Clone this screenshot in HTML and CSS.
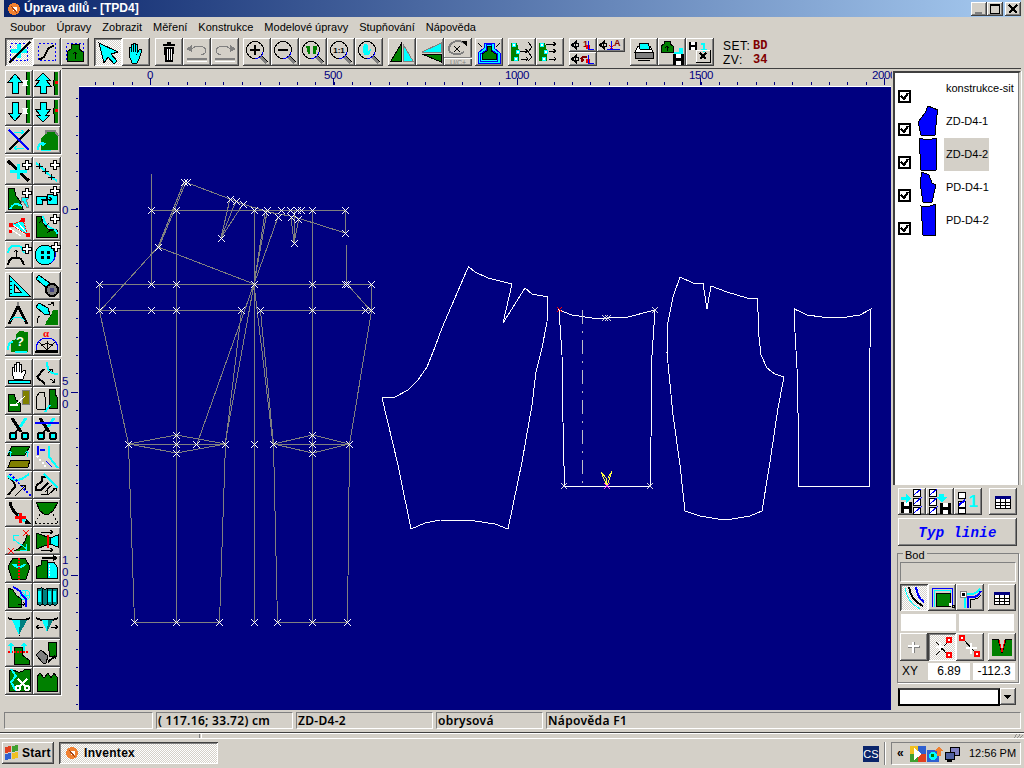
FILE: index.html
```html
<!DOCTYPE html>
<html lang="cs">
<head>
<meta charset="utf-8">
<title>Úprava dílů - [TPD4]</title>
<link rel="stylesheet" href="styles.css">
</head>
<body>
<svg class="defs" width="0" height="0">
  <symbol id="plus" viewBox="0 0 9 9" width="9" height="9" overflow="visible"><path class="w K" d="M3 0h3v3h3v3H6v3H3V6H0V3h3z"/></symbol>
  <symbol id="mag" viewBox="0 0 28 28" width="28" height="28"><circle class="K" cx="12" cy="12" r="8.5"/><path class="B" d="M12 20.500c5 0 8-3 8-7"/><path class="A t3" d="M18 19l6 6"/><path class="K" d="M19 18l6 6"/></symbol>
  <symbol id="sci" viewBox="0 0 28 28" width="28" height="28"><path class="K t3" d="M7 3l9 14"/><path class="C t3" d="M21 3l-6 9"/><path class="K t2" d="M14 13l-4 5"/><circle class="c K t2" cx="8" cy="21" r="3.5"/><circle class="c K t2" cx="20" cy="21" r="3.5"/></symbol>
  <symbol id="cal" viewBox="0 0 28 28" width="28" height="28"><path class="w K" d="M6.500 8.500h15v12h-15z"/><path class="n" d="M6 8h16v3H6z"/><path class="K" d="M6 14.500h16M6 17.500h16M11 11v10M16 11v10"/></symbol>
  <symbol id="up" viewBox="0 0 28 28" width="28" height="28"><path class="c K" d="M10 4l7 8h-4v11H7V12H3z"/></symbol>
  <symbol id="up2" viewBox="0 0 28 28" width="28" height="28"><path class="c K" d="M10 3l7 7h-4l5 6h-5v7H7v-7H2l5-6H3z"/></symbol>
  <symbol id="fl" viewBox="0 0 12 12" width="12" height="12"><path class="k" d="M0 1h11v11H0z"/><path class="w" d="M3 1h5v4H3zM3 8h5v4H3z"/></symbol>
  <symbol id="chk" viewBox="0 0 10 26" width="10" height="26"><path class="K w" d="M.5 .5h7v7h-7zM.5 9.500h7v7h-7zM.5 18.500h7v7h-7z"/><path class="B" d="M1 6l8-7M1 15l8-7M1 24l8-7"/></symbol>
</svg>

<div class="window">
  <header class="titlebar">
    <svg class="appicon" viewBox="0 0 12 12"><circle class="o2" cx="6" cy="6" r="6"/><circle class="w" cx="7" cy="6" r="2.500"/><path class="Br" d="M3 3l6 7"/></svg>
    <span>Úprava dílů - [TPD4]</span>
    <div class="winbtns">
      <span class="wb"><svg viewBox="0 0 16 14" class="wi"><path class="A t2" d="M4 11h7"/></svg></span>
      <span class="wb"><svg viewBox="0 0 16 14" class="wi"><path class="K" d="M3.500 2.500h9v9h-9z"/><path class="K t2" d="M3 3h10"/></svg></span>
      <span class="wb close"><svg viewBox="0 0 16 14" class="wi"><path class="K t2" d="M4 3l8 8M12 3l-8 8"/></svg></span>
    </div>
  </header>

  <nav class="menu">
    <span>Soubor</span><span>Úpravy</span><span>Zobrazit</span><span>Měření</span><span>Konstrukce</span><span>Modelové úpravy</span><span>Stupňování</span><span>Nápověda</span>
  </nav>

  <div class="toolbar">
    <div class="grp">
      <div class="b on"><svg class="i"><rect class="B dash" x="5.500" y="5.500" width="17" height="17"/><path class="c" d="M6 11h6V6h4v5h6v4h-6v5h-4v-5H6z"/><path class="K t2" d="M4 25L25 4"/></svg></div>
      <div class="b"><svg class="i"><rect class="B dash" x="5.500" y="5.500" width="17" height="17"/><path class="K t2" d="M6 21c9 0 5-12 15-13"/></svg></div>
      <div class="b"><svg class="i"><rect class="B dash" x="5.500" y="5.500" width="17" height="17"/><path class="g K" d="M6 23V14l4-3V6h8v5l4 3v9z"/><path class="K" d="M14 21v-7M12 16l2-2 2 2"/></svg></div>
    </div>
    <div class="grp">
      <div class="b on"><svg class="i"><path class="c K" d="M5 5l19 9-7 2 6 7-3 3-6-7-4 6z"/></svg></div>
      <div class="b"><svg class="i"><path class="c K" d="M7 14V9h2v5V6h2v8V5h2v9V6h2v9l3-4 2 1-3 9-2 4H10l-3-8z"/></svg></div>
    </div>
    <div class="grp">
      <div class="b"><svg class="i"><path class="K t2" d="M8 7h12M12 5h4"/><path class="k" d="M9 9h10l-1 15h-8z"/><path class="W" d="M12 11v11M14 11v11M16 11v11"/></svg></div>
      <div class="b"><svg class="i"><path class="A" d="M8 11c5-4 14-4 15 2 0 2-2 3-5 4"/><path class="a" d="M3 11l6-4v7z"/><path class="A t2" d="M4 21h20"/><path class="W" d="M4 23h20"/></svg></div>
      <div class="b"><svg class="i"><path class="A" d="M20 11c-5-4-14-4-15 2 0 2 2 3 5 4"/><path class="a" d="M25 11l-6-4v7z"/><path class="A t2" d="M4 21h20"/><path class="W" d="M4 23h20"/></svg></div>
    </div>
    <div class="grp g4">
      <div class="b"><svg class="i"><use href="#mag"/><path class="K t2" d="M7 12h10M12 7v10"/></svg></div>
      <div class="b"><svg class="i"><use href="#mag"/><path class="K t2" d="M7 12h10"/></svg></div>
      <div class="b"><svg class="i"><use href="#mag"/><path class="g" d="M7 8h4v8H9zM14 8h4l-1 8h-3z"/></svg></div>
      <div class="b"><svg class="i"><use href="#mag"/><text class="st" x="12" y="15" text-anchor="middle">1:1</text></svg></div>
      <div class="b"><svg class="i"><use href="#mag"/><path class="c" d="M8 12V8h1v3V6h1v5V6h2v5V7h1v6l2-2 1 1-2 5H9z"/></svg></div>
    </div>
    <div class="grp g3">
      <div class="b"><svg class="i"><path class="g K" d="M13 6v17H3z"/><path class="c A" d="M15 6l10 17H15z"/></svg></div>
      <div class="b"><svg class="i"><path class="c A" d="M25 5v9H6z"/><path class="g K" d="M6 16h19v8z"/></svg></div>
      <div class="b"><svg class="i"><path class="A t2" d="M20 5c-7-5-15 0-15 6 0 4 8 8 15 3"/><path class="k" d="M17 3h6v6z"/><path class="K" d="M10 8l6 6M16 8l-6 6"/><path class="A" d="M0 19.500h28"/><path class="W" d="M0 20.500h28"/><text class="dt" x="14" y="27" text-anchor="middle">U/C+</text></svg></div>
    </div>
    <div class="grp g3">
      <div class="b"><svg class="i"><path class="c B" d="M3 25V15l6-5V5h10v5l6 5v10z"/><path class="c B" d="M5.500 23V16l6-4V6h5v6l6 4v7z"/><path class="g K" d="M7 21v-5l5-3V8h4v5l5 3v5z"/><path class="K" d="M7 9L3 5M21 9l4-4"/></svg></div>
    </div>
    <div class="grp">
      <div class="b"><svg class="i"><path class="g" d="M3 5h6l2 8v10H3z"/><path class="K" d="M12 13h7M17 11l3 2-3 2M13 21h6M18 19l2 2-2 2M20 4l4 5-4 5 4 5-4 4"/><path class="w C" d="M4.500 5.500h3v3h-3zM8.500 12.500h3v3h-3zM6.500 19.500h3v3h-3z"/></svg></div>
      <div class="b"><svg class="i"><path class="g" d="M3 5h6l2 8v10H3z"/><path class="K" d="M10 6h9M17 4l3 2-3 2M13 13h6M17 11l3 2-3 2M13 21h7M18 19l2 2-2 2"/><path class="w C" d="M4.500 5.500h3v3h-3zM8.500 12.500h3v3h-3zM6.500 19.500h3v3h-3z"/></svg></div>
    </div>
    <div class="grp smalls">
      <div class="b s"><svg class="i"><path class="K t2" d="M8 3L3 7l5 4"/><circle class="K" cx="8" cy="7" r="2"/><text class="rt" x="14" y="9">1</text><path class="r" d="M17 7h4v4h-4z"/><path class="B" d="M19 11h6M19 3v9"/></svg></div>
      <div class="b s"><svg class="i"><path class="K t2" d="M8 3L3 7l5 4"/><circle class="K" cx="8" cy="7" r="2"/><text class="rt" x="17" y="8">A</text><path class="R" d="M12 7l5 5M17 7l-5 5"/><path class="B" d="M10 11h13M14 3v9"/></svg></div>
      <div class="b s"><svg class="i"><path class="K t2" d="M8 3L3 7l5 4"/><circle class="K" cx="8" cy="7" r="2"/><path class="M t2" d="M13 5v5M13 5h5M12 6l3 3"/><path class="r" d="M17 7h4v4h-4z"/><path class="B" d="M19 11h6M19 3v9"/></svg></div>
    </div>
    <div class="grp">
      <div class="b"><svg class="i"><path class="w K" d="M8 8h12l3 6H5z"/><path class="c K" d="M9 5h9l2 6H10z"/><path class="a K" d="M5 14h18v6H5z"/><path class="K" d="M8 22h12"/></svg></div>
      <div class="b"><svg class="i"><path class="g K" d="M3 14V8l3-2V3h6v3l3 2v6z"/><path class="K" d="M9 13V8M7.500 10L9 8l1.500 2"/><path class="c" d="M16 14h9v2h-9zM21 10h4v4h-4z"/><use href="#fl" x="15" y="15"/></svg></div>
      <div class="b"><svg class="i"><use href="#fl" transform="translate(3 3) scale(.75)"/><path class="C t2" d="M15 6h3v6"/><path class="c" d="M15 11h6l-3 4z"/><path class="K" d="M10.500 12.500h14v12h-14z"/><path class="W" d="M10 12h14M10 12v12"/><path class="K t2" d="M14 15l6 6M20 15l-6 6"/></svg></div>
    </div>
    <div class="setinfo">
      <div class="setrow"><span class="setl">SET:</span><b>BD</b></div>
      <div class="setrow"><span class="setl">ZV:</span><b>34</b></div>
    </div>
  </div>

  <div class="main">
    <aside class="tools">
      <div class="tg">
        <div class="b"><svg class="i"><use href="#up"/><path class="g" d="M21 2h4v23h-4z"/><path class="K" d="M21 2c1 6 1 6-1 11 2 5 2 5 1 12"/><path class="W t2" d="M18 10l4 6M22 10l-4 6"/></svg></div>
        <div class="b"><svg class="i"><use href="#up2"/><path class="g" d="M21 2h4v23h-4z"/><path class="K" d="M21 2c1 6 1 6-1 11 2 5 2 5 1 12"/><path class="r" d="M22 11h3v3h-3z"/></svg></div>
        <div class="b"><svg class="i"><use href="#up" transform="matrix(1 0 0 -1 0 27)"/><path class="g" d="M21 2h4v23h-4z"/><path class="K" d="M21 2c1 6 1 6-1 11 2 5 2 5 1 12"/><path class="W t2" d="M18 10l4 6M22 10l-4 6"/></svg></div>
        <div class="b"><svg class="i"><use href="#up2" transform="matrix(1 0 0 -1 0 27)"/><path class="g" d="M21 2h4v23h-4z"/><path class="K" d="M21 2c1 6 1 6-1 11 2 5 2 5 1 12"/><path class="r" d="M22 11h3v3h-3z"/></svg></div>
        <div class="b"><svg class="i"><path class="K t2" d="M4 24L24 4"/><path class="B t2" d="M4 4l20 20"/><path class="C" d="M9 6h10M16 4l3 2-3 2M9 22h10M12 20l-3 2 3 2"/></svg></div>
        <div class="b"><svg class="i"><path class="g" d="M8 24V12l5-4V5h9l3 5v14z"/><path class="A t2" d="M13 8V5h9l3 5"/><path class="C t2" d="M5 24c0-5 2-7 6-7"/><path class="c" d="M8 17h5l-3 4z"/><path class="C" d="M8 24h10"/></svg></div>
      </div>
      <div class="tg">
        <div class="b"><svg class="i"><path class="K t3" d="M3 4l21 20"/><path class="c" d="M5 13h17v3H5zM12 7h3v15h-3z"/><use href="#plus" x="17" y="3"/></svg></div>
        <div class="b"><svg class="i"><path class="C t2" d="M3 6c6 4 12 12 21 18"/><path class="K" d="M3 9h7M6 6v6M9 14h7M12 11v6M15 20h7M18 17v6"/><use href="#plus" x="17" y="3"/></svg></div>
        <div class="b"><svg class="i"><path class="g K" d="M3 3h6l2 8 4 5 3 8H3z"/><path class="c A" d="M16 12h7v2l-2 1 3 7-2 1-4-7-2 2z"/><path class="C t2" d="M5 24c4-6 6-6 12-3"/><use href="#plus" x="17" y="3"/></svg></div>
        <div class="b"><svg class="i"><path class="c K" d="M3 11h10v4H9v4H3zM14 9h10v10H14z"/><path class="K" d="M8 14h11M16 12l3 2-3 2"/><use href="#plus" x="17" y="1"/></svg></div>
        <div class="b"><svg class="i"><path class="c" d="M7 11l11-4 5 15z"/><path class="W" d="M9 12l10 9M13 10l8 9M4 15l12 8"/><path class="R dash2" d="M6 12l12-5 5 15L6 12"/><path class="r" d="M4 10h4v4H4zM16 5h4v4h-4zM21 20h4v4h-4zM4 17h3v3H4z"/></svg></div>
        <div class="b"><svg class="i"><path class="g K" d="M3 3h5l2 7 5 6 9 1v7H3z"/><path class="C t2" d="M10 3c1 7 3 10 8 12 3 1 6 3 6 6"/><path class="K" d="M6 10l3-3M16 10l-3 3M14 20l4-3M21 16l-3 2"/><use href="#plus" x="17" y="1"/></svg></div>
        <div class="b"><svg class="i"><path class="C t2" d="M3 12c1-6 3-7 6-7h4c3 0 4 2 6 7"/><path class="K t2" d="M3 24c1-6 3-7 6-7h4c3 0 4 2 6 7"/><path class="K" d="M11 18V9M9 11l2-2 2 2"/><use href="#plus" x="17" y="3"/></svg></div>
        <div class="b"><svg class="i"><circle class="c K" cx="12" cy="14" r="10"/><path class="B" d="M20 6c4 5 3 12-2 16"/><path class="k" d="M8 10h3v3H8zM14 10h3v3h-3zM8 15h3v3H8zM14 15h3v3h-3z"/><use href="#plus" x="18" y="1"/></svg></div>
      </div>
      <div class="tg">
        <div class="b"><svg class="i"><path class="c K" d="M4 3l21 21H4z"/><path class="d3 K" d="M9 12l7 8H9z"/><path class="K" d="M5 9h2M5 13h2M5 17h2M5 21h2"/></svg></div>
        <div class="b"><svg class="i"><path class="c K" d="M3 7l3-4 12 9-3 5z"/><circle class="a K t2" cx="19" cy="18" r="6"/><circle class="n2" cx="19" cy="18" r="2.500"/></svg></div>
        <div class="b"><svg class="i"><path class="A t2" d="M13 2v4"/><path class="K t3" d="M13 6L4 24M13 6l9 18"/><path class="C" d="M5 21c3-5 12-5 15 0"/></svg></div>
        <div class="b"><svg class="i"><path class="g" d="M12 25c1-5 6-8 8-15h5v15z"/><path class="c K" d="M3 7l3-4 9 5 2 7-6-1z"/><path class="K" d="M15 5l6-2M18 2l3 1-1 3M4 23c0-5 1-6 3-7"/></svg></div>
        <div class="b"><svg class="i"><path class="g" d="M6 24V13l5-2V6l4-3 8 1v20z"/><text class="qm" x="15" y="18" text-anchor="middle">?</text><path class="C t2" d="M3 22c0-5 1-8 5-8M10 24h12"/></svg></div>
        <div class="b"><svg class="i"><text class="alpha" x="13" y="9" text-anchor="middle">α</text><path class="B" d="M3 22c0-8 5-12 11-12s11 4 11 12"/><path class="K" d="M2.500 22.500h22M14 22l-8-8M14 22l8-8M14 22v-9M8 18c3-3 9-3 12 0"/><path class="K t2" d="M2 24h23"/></svg></div>
      </div>
      <div class="tg">
        <div class="b"><svg class="i"><path class="w K" d="M7 14V8h2v5V5h2v8V3h3v10V5h2v9l3-3 2 1-3 8H9z"/><path class="c K" d="M3 21h22v3H3z"/></svg></div>
        <div class="b"><svg class="i"><path class="C t2" d="M14 3c0 9 5 12 11 12"/><path class="K t2" d="M4 18l7-8M4 18l8 7"/><path class="K" d="M15 14l4-4M16 10h3v3M17 20l5 3M19 24l3-1-1-3"/></svg></div>
        <div class="b"><svg class="i"><path class="g K" d="M3 7h6l2 6 4 3v8H3z"/><path class="o A" d="M17 3h7v14h-7V9z"/><path class="w" d="M5 17h8v2H5z"/><path class="W" d="M10 18l10-9"/></svg></div>
        <div class="b"><svg class="i"><path class="K" d="M3 10l4-5h4l1 5v12H4z"/><path class="g K" d="M16 2h6v5l2 3v11h-8z"/><path class="k" d="M19 6v10"/><path class="C t2" d="M12 25l5-7"/></svg></div>
        <div class="b"><svg class="i"><use href="#sci"/></svg></div>
        <div class="b"><svg class="i"><use href="#sci"/><path class="B t2" d="M2 8h24"/></svg></div>
        <div class="b"><svg class="i"><path class="g K" d="M7 3h18l-5 9H3z"/><path class="o K" d="M6 17h19l-2 7H3z"/><path class="C" d="M5 14V8M3 10l2-2 2 2M22 14V8M20 10l2-2 2 2"/></svg></div>
        <div class="b"><svg class="i"><path class="B t2" d="M5 3v9M7 7h5"/><path class="W t2 dash3" d="M4 13l9 11"/><path class="B" d="M13 18l6 6"/><path class="C t2" d="M16 3v11l9 11"/></svg></div>
        <div class="b"><svg class="i"><path class="K t2" d="M3 6c5 3 7 7 7 10l-7 8"/><path class="C t2" d="M3 5c5 5 12 6 21-2"/><path class="B t2 dash4" d="M5 3l21 22"/><path class="K" d="M10 25l10-10M15 14h5v5"/></svg></div>
        <div class="b"><svg class="i"><path class="K t2" d="M3 15l6-5v-4h5M3 15v4h5l7-7"/><path class="K" d="M8 23h6v-5l5-4M12 21l5-5"/><path class="C t2" d="M11 3l14 14"/><path class="K" d="M15 24l8-7M20 17h3v3"/></svg></div>
        <div class="b"><svg class="i"><path class="K t3" d="M5 3c1 7 4 10 8 13"/><path class="C t3" d="M13 16l7 6"/><path class="r" d="M14 14h3v10h-3zM10 17h11v3H10z"/><path class="k" d="M21 20l5 5-6 0z"/></svg></div>
        <div class="b"><svg class="i"><path class="g K" d="M3 3h22l-5 9-4 3H11l-4-3z"/><path class="K dash4" d="M2 24l5-9M25 24l-5-9M2 24h24"/></svg></div>
        <div class="b"><svg class="i"><path class="g" d="M9 24c6-2 11-7 13-16h3v16z"/><path class="K" d="M9 24c6-2 11-7 13-16"/><path class="R" d="M18 3l6 6M24 3l-6 6M3 21l6 6M9 21l-6 6"/><path class="C" d="M8 12l14 10M8 8v6M8 8h6M21 17v6h-6"/></svg></div>
        <div class="b"><svg class="i"><path class="g K" d="M3 6l14 5v6L3 22z"/><path class="c K" d="M17 11l8-3v12l-8-3z"/><path class="r" d="M14 8h2v13h-2z"/><path class="K" d="M8 5h12M17 3l3 2-3 2M8 23h12M17 21l3 2-3 2"/></svg></div>
        <div class="b"><svg class="i"><path class="g K" d="M8 3h12l5 9-4 12H7L3 12z"/><path class="C t2" d="M8 9c3 4 9 4 12 0"/><path class="C" d="M12 9l-3 1 2 2"/><path class="R dash2 t2" d="M14 3v22"/></svg></div>
        <div class="b"><svg class="i"><path class="g K" d="M3 23V12l5-2V5h6v18z"/><path class="c" d="M15 7h6l3 5v11h-9z"/><path class="K" d="M15 7h6l3 5v11H3"/><path class="K t2" d="M9 3h13M20 1l3 2-3 2"/><path class="W dash2" d="M16 10v12"/></svg></div>
        <div class="b"><svg class="i"><path class="g K" d="M3 5l5 2 3 5 5 4v8H3z"/><circle class="C" cx="20" cy="12" r="5"/><path class="C" d="M15 12h10M20 7v10M16 8l8 8"/><path class="B t2" d="M8 4c4 2 8 3 9 8l4 4v8"/><path class="K" d="M13 21h7M18 19l2 2-2 2"/></svg></div>
        <div class="b"><svg class="i"><path class="d4 K" d="M4 5c2 2 5-1 5 0v16c0 1-3 2-5 0zM9 5c2 2 5 1 5 0v16c0 1-3 2-5 0zM14 5c2 1 5 1 5 0v16c0 1-3 2-5 0zM19 5c2 1 5 1 5 0v16c0 1-3 2-5 0z"/><path class="c" d="M5 8h3v11H5zM15 8h3v11h-3zM20 8h3v11h-3z"/></svg></div>
        <div class="b"><svg class="i"><path class="K t2" d="M3 7l5 2h12l5-2"/><path class="c" d="M7 9h8l-1 15z"/><path class="d4" d="M15 9h7l-8 15z"/><path class="K" d="M14 24v1"/></svg></div>
        <div class="b"><svg class="i"><path class="K t2" d="M3 7l5 2h12l5-2"/><path class="c" d="M9 9h6l-1 12z"/><path class="d4" d="M15 9h5l-6 12z"/><path class="K" d="M3 16h7M3 16l3-2M3 16l3 2M25 16h-7M25 16l-3-2M25 16l-3 2"/></svg></div>
        <div class="b"><svg class="i"><path class="g K" d="M9 8h8v8l7 5v4H9z"/><path class="R dash2 t2" d="M3 13h20"/><path class="C t2" d="M6 14V4M19 12V4"/><path class="c" d="M3 7l3-4 3 4zM16 7l3-4 3 4z"/></svg></div>
        <div class="b"><svg class="i"><path class="g K" d="M16 3h7v14h-7v-5l-1-4z"/><path class="a K" d="M3 16l5-5 7 6-2 7h-3z"/><path class="K t2" d="M15 23l7-6"/><path class="K" d="M19 17h3v3"/></svg></div>
        <div class="b"><svg class="i"><path class="g K" d="M4 3h5c3 3 8 3 11-1h5v22H4z"/><path class="C t2" d="M6 2l5 7-5 6 5 9"/><path class="W t2" d="M13 12l8 8M22 12l-8 8"/><circle class="W t2" cx="13" cy="21" r="2"/><circle class="W t2" cx="22" cy="21" r="2"/></svg></div>
        <div class="b"><svg class="i"><path class="g K" d="M4 24V10l3-4 4 5 4-5 3 5 3-5 3 4v14z"/></svg></div>
      </div>
    </aside>

    <svg class="stage" viewBox="62 66 830 645">
      <path class="w" d="M79 86h812v1H79z"/>
      <path class="nv" d="M79 87h812v623H79z"/>
      <path class="N tick3" d="M95 83.500h795"/>
      <path class="N tick2" d="M77 98v612"/>
      <path class="N" d="M150.500 78v7M333.500 78v7M517.500 78v7M700.500 78v7M884.500 78v7M71 209.500h7M71 392.500h7M71 575.500h7"/>
      <g class="rul">
        <text x="150" y="79" text-anchor="middle">0</text>
        <text x="333" y="79" text-anchor="middle">500</text>
        <text x="517" y="79" text-anchor="middle">1000</text>
        <text x="701" y="79" text-anchor="middle">1500</text>
        <text x="884" y="79" text-anchor="middle">2000</text>
        <text x="65" y="214" text-anchor="middle">0</text>
        <text x="65" y="385" text-anchor="middle">5</text>
        <text x="65" y="397" text-anchor="middle">0</text>
        <text x="65" y="408" text-anchor="middle">0</text>
        <text x="65" y="564" text-anchor="middle">1</text>
        <text x="65" y="576" text-anchor="middle">0</text>
        <text x="65" y="587" text-anchor="middle">0</text>
        <text x="65" y="597" text-anchor="middle">0</text>
      </g>
      <path class="con" d="M151.500 210.500H345.500M151.500 174V284M176.500 210V622M254.500 210V622M312.500 210V622M345.500 210V233M346.500 245V284M99.500 284.500H371.500M99.500 310.500H241.500M260.500 310.500H371.500M99.500 284V311M371.500 284V311M185 182L230 199L243 204L268 212L290 216L298 218L345 233M184 182L158 247L254 284M186 182L159 247M158 247L99 312M221 238L230 199M221 238L236 201M221 238L243 204M294 243L291 217M294 243L294 211M294 243L299 218M254 284L267 212M254 284L265 213M254 284L278 217M254 284L197 444M254 284L225 444M254 284L273 444M99.500 311L128.500 444M241.500 311L225.500 444M260.500 311L273.500 444M371.500 311L349.500 444M128.500 444L134.500 622M225.500 444L219.500 622M273.500 444L277.500 622M349.500 444L347.500 622M134.500 622.500H219.500M277.500 622.500H347.500M128.500 444.500H225.500M273.500 444.500H349.500M128.500 444L176.500 435L225.500 444L176.500 453ZM273.500 444L312.500 435L349.500 444L312.500 453ZM347 284L371 311"/>
      <path class="mk" d="M148 207l7 7m0-7l-7 7M173 207l7 7m0-7l-7 7M251 207l7 7m0-7l-7 7M264 207l7 7m0-7l-7 7M278 207l7 7m0-7l-7 7M287 207l7 7m0-7l-7 7M294 207l7 7m0-7l-7 7M298 207l7 7m0-7l-7 7M309 207l7 7m0-7l-7 7M342 207l7 7m0-7l-7 7M181 179l7 7m0-7l-7 7M184 179l7 7m0-7l-7 7M227 196l7 7m0-7l-7 7M233 198l7 7m0-7l-7 7M240 201l7 7m0-7l-7 7M218 235l7 7m0-7l-7 7M155 244l7 7m0-7l-7 7M342 230l7 7m0-7l-7 7M275 214l7 7m0-7l-7 7M288 214l7 7m0-7l-7 7M295 216l7 7m0-7l-7 7M291 240l7 7m0-7l-7 7M262 209l7 7m0-7l-7 7M96 281l7 7m0-7l-7 7M148 281l7 7m0-7l-7 7M173 281l7 7m0-7l-7 7M251 281l7 7m0-7l-7 7M309 281l7 7m0-7l-7 7M342 281l7 7m0-7l-7 7M344 281l7 7m0-7l-7 7M368 281l7 7m0-7l-7 7M96 307l7 7m0-7l-7 7M109 307l7 7m0-7l-7 7M148 307l7 7m0-7l-7 7M173 307l7 7m0-7l-7 7M238 307l7 7m0-7l-7 7M257 307l7 7m0-7l-7 7M309 307l7 7m0-7l-7 7M362 307l7 7m0-7l-7 7M368 307l7 7m0-7l-7 7M125 441l7 7m0-7l-7 7M173 441l7 7m0-7l-7 7M193 441l7 7m0-7l-7 7M222 441l7 7m0-7l-7 7M251 441l7 7m0-7l-7 7M270 441l7 7m0-7l-7 7M309 441l7 7m0-7l-7 7M346 441l7 7m0-7l-7 7M173 432l7 7m0-7l-7 7M309 432l7 7m0-7l-7 7M173 450l7 7m0-7l-7 7M309 450l7 7m0-7l-7 7M131 619l7 7m0-7l-7 7M173 619l7 7m0-7l-7 7M216 619l7 7m0-7l-7 7M251 619l7 7m0-7l-7 7M274 619l7 7m0-7l-7 7M309 619l7 7m0-7l-7 7M344 619l7 7m0-7l-7 7"/>
      <path class="pc" d="M468.500 266.500L475 272L488 278L500 281L512 284L503 323L525 288L532 294L548 297L547 322L542 348L536 372L532 405L522 462L508 529L495 524L475 521L440 520L425 523L411 529L398 465L382 398L395 397L408 390L418 380L427 367L435 347L442 328Z"/>
      <path class="pc" d="M559 310L572 315L592 318L608 318L628 317L655 310L652 355L651 438L650.500 486.500H564.500L563 422L562 355Z"/>
      <path class="dd" d="M582.500 310V486"/>
      <path class="mk2" d="M605 315l6 6m0-6l-6 6M602 315l6 6m0-6l-6 6M652 307l6 6m0-6l-6 6M561 483l6 6m0-6l-6 6M647 483l6 6m0-6l-6 6"/>
      <path class="R" d="M557 307l5 5m0-5l-5 5"/>
      <path class="Y" d="M601 472L607 486L612 471M601 472L606 478L607 484M612 471L608 478"/>
      <path class="M2" d="M604 483l6 6m0-6l-6 6"/>
      <path class="pc" d="M680 277L693 283L703 283L707 309L711 286L727 292L747 298L757.500 299L759 337L761 355L767 368L775 374L784 377L778 408L770 462L762 511L750 516L732 519L718 519L700 516L685 511L680 465L673 415L667 353L668 322L673 297Z"/>
      <path class="pc" d="M794.500 309L807 315L822 317L847 317L860 315L871 309L870 348L869 380L869 486.500H798L798 413L797 368L794.500 323Z"/>
    </svg>

    <aside class="side">
      <div class="list">
        <div class="row r0"><span class="cb"><svg viewBox="0 0 9 9"><path class="K t2" d="M1 4l3 3 4-6"/></svg></span><span class="thumb"></span><span class="lab">konstrukce-sit</span></div>
        <div class="row"><span class="cb"><svg viewBox="0 0 9 9"><path class="K t2" d="M1 4l3 3 4-6"/></svg></span><svg class="thumb" viewBox="0 0 22 33"><path class="bl K" d="M10 1L20 5L19 10L17 30H3L0 17L7 8Z"/></svg><span class="lab">ZD-D4-1</span></div>
        <div class="row"><span class="cb"><svg viewBox="0 0 9 9"><path class="K t2" d="M1 4l3 3 4-6"/></svg></span><svg class="thumb" viewBox="0 0 22 33"><path class="bl K" d="M1 0L9 2L19 0L18 32H3Z"/></svg><span class="lab sel">ZD-D4-2</span></div>
        <div class="row"><span class="cb"><svg viewBox="0 0 9 9"><path class="K t2" d="M1 4l3 3 4-6"/></svg></span><svg class="thumb" viewBox="0 0 22 33"><path class="bl K" d="M4 1L11 4L14 12L18 14L14 31H5L2 12Z"/></svg><span class="lab">PD-D4-1</span></div>
        <div class="row"><span class="cb"><svg viewBox="0 0 9 9"><path class="K t2" d="M1 4l3 3 4-6"/></svg></span><svg class="thumb" viewBox="0 0 22 33"><path class="bl K" d="M3 2L10 3L17 0L17 31H5Z"/></svg><span class="lab">PD-D4-2</span></div>
      </div>
      <div class="prow p1">
        <div class="b"><svg class="i"><use href="#fl" x="3" y="13"/><path class="c" d="M3 9h5V6l5 5-5 4v-3H3z"/><use href="#chk" x="15" y="1"/></svg></div>
        <div class="b"><svg class="i"><use href="#chk" x="3" y="1"/><path class="c" d="M13 6h5v3h3l-5 6-5-6h2z"/><use href="#fl" x="14" y="14"/></svg></div>
        <div class="b"><svg class="i"><path class="K w" d="M4.500 4.500h7v6h-7zM4.500 13.500h7v6h-7zM4.500 20.500h7v5h-7z"/><path class="B t2" d="M5 17l6-5"/><text class="one" x="19" y="19" text-anchor="middle">1</text></svg></div>
        <div class="b pgap"><svg class="i"><use href="#cal"/></svg></div>
      </div>
      <div class="b typ">Typ linie</div>
      <fieldset class="bod">
        <legend>Bod</legend>
        <div class="sunk"></div>
        <div class="prow r27">
          <div class="b on"><svg class="i"><path class="C" d="M5 4c1 9 6 16 15 21"/><path class="K t2" d="M9 3c1 9 6 15 14 19"/><path class="B t2" d="M16 3c1 7 3 12 8 15"/></svg></div>
          <div class="b"><svg class="i"><path class="B" d="M4 23V4h20v17"/><path class="C" d="M6 23V6h16v15"/><path class="g K" d="M8 9h14v13H8z"/><path class="w" d="M21 19h3v3h-3z"/><path class="K" d="M24 21h2v2h-2z"/></svg></div>
          <div class="b"><svg class="i"><path class="B t2" d="M12 24V13h6c3 0 4-2 7-6"/><path class="C t2" d="M9 24V10h7c3 0 5-2 8-5"/><path class="K" d="M14 24V15h5c3 0 4-2 6-4"/><path class="w A" d="M4.500 7.500h6v6h-6z"/><path class="k" d="M6 9h3v3H6z"/></svg></div>
          <div class="b pgap2"><svg class="i"><use href="#cal"/></svg></div>
        </div>
        <div class="whites"><span></span><span></span></div>
        <div class="prow">
          <div class="b"><svg class="i"><path class="A t2" d="M14 9v11M8 14h12"/><path class="W t2" d="M13 9v11M8 13h11"/></svg></div>
          <div class="b on"><svg class="i"><path class="K" d="M8 9l12 13M20 9L8 22"/><path class="W t2" d="M8 14h8M12 9v9"/><path class="w R t2" d="M19 5h4v4h-4zM19 20h4v4h-4z"/></svg></div>
          <div class="b"><svg class="i"><path class="K" d="M6 5l15 16"/><path class="W t2" d="M10 15h11M15 10v11"/><path class="w R t2" d="M4 3h4v4H4zM19 19h4v4h-4z"/></svg></div>
          <div class="b pgap2"><svg class="i"><path class="g" d="M4 6h6l4 14 4-14h6v17H4z"/><path class="K" d="M4 6h6l4 14 4-14h6"/><path class="R" d="M11 7l3 12 3-12"/></svg></div>
        </div>
        <div class="xy"><span class="xyl">XY</span><span class="val v1">6.89</span><span class="val">-112.3</span></div>
      </fieldset>
      <div class="combo"><span class="cfield"></span><span class="cbtn"><svg viewBox="0 0 8 4" class="carr"><path class="k" d="M0 0h7L3.500 4z"/></svg></span></div>
    </aside>
  </div>

  <footer class="status">
    <span class="sp s1"></span><span class="sp s2">( 117.16; 33.72) cm</span><span class="sp s3">ZD-D4-2</span><span class="sp s4">obrysová</span><span class="sp s5">Nápověda F1</span>
  </footer>
</div>

<div class="strip"><span class="split"></span><svg class="grip" viewBox="0 0 12 5"><path class="A" d="M1 5l4-5M5 5l4-5M9 5l3-4"/></svg></div>

<div class="taskbar">
  <div class="start">
    <svg class="flag" viewBox="0 0 16 16"><path class="fr1" d="M1 2l6-1v6l-6 1z"/><path class="fg1" d="M8 1l6-1v6l-6 1z"/><path class="fb1" d="M1 9l6-1v6l-6 1z"/><path class="fy1" d="M8 8l6-1v6l-6 1z"/></svg>
    <span>Start</span>
  </div>
  <div class="task">
    <svg class="appicon" viewBox="0 0 12 12"><circle class="o2" cx="6" cy="6" r="6"/><circle class="w" cx="7" cy="6" r="2.500"/><path class="Br" d="M3 3l6 7"/></svg>
    <span>Inventex</span>
  </div>
  <div class="spacer"></div>
  <div class="lang">CS</div>
  <div class="tsep"></div>
  <div class="tray">
    <span class="chev">«</span>
    <svg class="ti" viewBox="0 0 16 16"><path class="fg1" d="M0 8h8v8H0z"/><path class="fb1" d="M8 0h8v8H8z"/><path class="fy1" d="M0 0h8v8H0z"/><path class="fr1" d="M8 8h8v8H8z"/><path class="w" d="M4 2l8 6-8 6z"/></svg>
    <svg class="ti" viewBox="0 0 16 16"><path class="fb1" d="M0 4h12v12H0z"/><circle class="c" cx="6" cy="10" r="4"/><path class="g" d="M4 8h3v3H4z"/><path class="o2" d="M12 0l4 5h-2v5h-4V5H8z"/></svg>
    <svg class="ti" viewBox="0 0 16 16"><path class="n3 K" d="M6 1h9v8H6z"/><path class="n4 K" d="M1 6h9v7H1z"/><path class="k" d="M3 14h5v2H3z"/></svg>
    <span class="clock">12:56 PM</span>
  </div>
</div>
</body>
</html>
```
FILE: styles.css
```css
* { box-sizing: border-box; }
html, body { margin: 0; padding: 0; }
body {
  width: 1024px; height: 768px; overflow: hidden;
  background: #d4d0c8; color: #000;
  font: 11px/13px "Liberation Sans", "Noto Sans", sans-serif;
}
.defs { position: absolute; }

/* svg paint helpers */
svg { fill: none; shape-rendering: crispEdges; }
.g { fill: #008000; } .c { fill: #0ff; } .k { fill: #000; } .w { fill: #fff; } .r { fill: #f00; }
.o { fill: #808000; } .a { fill: #808080; } .n { fill: #000080; } .bl { fill: #0000ff; }
.nv { fill: #000080; } .o2 { fill: #f08030; } .n2 { fill: #404080; } .d3 { fill: #d4d0c8; } .d4 { fill: #008080; }
.n3 { fill: #8080c0; } .n4 { fill: #5060a0; }
.fr1 { fill: #e04020; } .fg1 { fill: #40a030; } .fb1 { fill: #3060d0; } .fy1 { fill: #f0c020; }
.K { stroke: #000; } .C { stroke: #0ff; } .B { stroke: #0000ff; } .R { stroke: #f00; } .W { stroke: #fff; }
.A { stroke: #808080; } .N { stroke: #000080; } .M { stroke: #800000; } .Y { stroke: #ffff40; } .M2 { stroke: #ff40ff; }
.Br { stroke: #a04010; }
.t2 { stroke-width: 2; } .t3 { stroke-width: 3; }
.dash { stroke-dasharray: 2 2; } .dash2 { stroke-dasharray: 2 1; } .dash3 { stroke-dasharray: 2 2; } .dash4 { stroke-dasharray: 2 2; }
.tick3 { stroke-width: 3; stroke-dasharray: 1 17.35; }
.tick2 { stroke-width: 2; stroke-dasharray: 1 17.35; }
.rul text { fill: #000080; font: 11.5px "Liberation Sans", sans-serif; letter-spacing: -.4px; }
.con { stroke: #808080; }
.mk { stroke: #fff; }
.mk2 { stroke: #e0e0e0; }
.pc { stroke: #fff; }
.dd { stroke: #c0c0c8; stroke-dasharray: 14 7 2 7; }
.st { font: bold 8px "Liberation Sans", sans-serif; fill: #000; }
.dt { font: 7px "Liberation Sans", sans-serif; fill: #808080; }
.rt { font: bold 9px "Liberation Sans", sans-serif; fill: #800000; }
.qm { font: bold 13px "Liberation Sans", sans-serif; fill: #fff; }
.alpha { font: bold 11px "Liberation Serif", serif; fill: #f00; }
.one { font: bold 17px "Liberation Sans", sans-serif; fill: #0ff; }

/* window */
.window { height: 733px; padding: 0 3px 0 4px; display: flex; flex-direction: column; border-bottom: 1px solid #404040; }
.titlebar {
  height: 17px; flex: none; display: flex; align-items: center; padding-left: 4px; gap: 4px;
  background: linear-gradient(90deg, #0a246a, #a6caf0);
  color: #fff; font-weight: 700; font-size: 12px;
}
.appicon { width: 12px; height: 12px; flex: none; }
.winbtns { margin-left: auto; display: flex; gap: 0; }
.wb {
  width: 16px; height: 14px; background: #d4d0c8; display: block;
  box-shadow: inset -1px -1px #404040, inset 1px 1px #fff, inset -2px -2px #808080;
}
.wb.close { margin-left: 2px; }
.wi { display: block; width: 16px; height: 14px; }
.menu { height: 20px; flex: none; display: flex; align-items: center; padding-left: 6px; gap: 11px; font-size: 11px; }
.toolbar { height: 32px; flex: none; display: flex; padding: 1px 0 0 1px; border-bottom: 1px solid #404040; }
.grp { display: flex; margin-right: 5px; }
.g4 { margin-right: 5px; }
.g3 { margin-right: 3px; }
.grp:nth-child(3) { margin-right: 4px; }
.grp.g3:nth-child(6) { margin-right: 5px; }
.grp.g3:nth-child(5) { margin-right: 3px; }
.smalls { width: 56px; flex-wrap: wrap; align-content: flex-start; }
.b {
  width: 28px; height: 28px; flex: none; background: #d4d0c8; position: relative; display: block;
  box-shadow: inset -1px -1px #404040, inset 1px 1px #fff, inset -2px -2px #808080;
}
.b.s { height: 14px; }
.b.s .i { height: 14px; }
.b.on {
  background: repeating-conic-gradient(#fff 0 25%, #d4d0c8 0 50%) 0 0 / 2px 2px;
  box-shadow: inset 1px 1px #404040, inset -1px -1px #fff, inset 2px 2px #808080;
}
.i { width: 28px; height: 28px; display: block; }
.setinfo { margin-left: 4px; padding-top: 1px; font-size: 12px; }
.setrow { display: flex; height: 14px; align-items: center; letter-spacing: .5px; }
.setl { width: 30px; }
.setrow b { color: #800000; font: bold 12px "Liberation Mono", monospace; letter-spacing: 0; }

/* main */
.main { flex: 1; display: flex; min-height: 0; }
.tools {
  width: 58px; flex: none; padding: 1px 0 0 1px; margin-top: -1px; border-top: 1px solid #d4d0c8; position: relative;
}
.tg {
  width: 57px; display: grid; grid-template-columns: 28px 28px; grid-auto-rows: 28px;
  border-bottom: 1px solid #fff; border-right: 1px solid #fff; margin-bottom: 2px;
}
.stage { width: 830px; height: 645px; margin-top: -3px; flex: none; display: block; }
.side { flex: 1; min-width: 0; padding-top: 2px; }
.list {
  height: 414px; margin: 0 0 3px 1px; background: #fff; padding: 0 0 0 3px;
  border-top: 2px solid #404040; border-left: 2px solid #404040; border-right: 2px solid #d4d0c8; box-shadow: inset -1px 0 #808080, 1px 0 #fff;
}
.row { height: 33px; display: flex; align-items: stretch; }
.r0 { height: 32px; }
.cb {
  width: 13px; height: 13px; border: 2px solid #000; background: #fff; margin: 18px 0 0 0; flex: none; display: block;
}
.r0 .cb { margin-top: 17px; }
.cb svg { display: block; width: 9px; height: 9px; }
.thumb { width: 22px; height: 33px; margin-left: 7px; flex: none; display: block; }
.lab { width: 45px; margin-left: 4px; padding-left: 2px; font-size: 11px; line-height: 33px; white-space: nowrap; }
.r0 .lab { line-height: 30px; }
.sel { background: #d4d0c8; }
.prow { display: flex; }
.p1 { margin: 1px 0 3px 6px; height: 27px; }
.p1 .b { height: 27px; }
.r27 .b { height: 27px; }
.pgap { margin-left: 7px; }
.pgap2 { margin-left: 4px; }
.typ {
  width: 119px; height: 28px; margin: 0 0 0 6px; text-align: center;
  font: italic bold 14px/31px "Liberation Mono", monospace; color: #0000ff; letter-spacing: .3px;
}
.bod { width: 120px; height: 137px; margin: 0 0 0 5px; padding: 0 2px; border: 1px solid #808080; box-shadow: 1px 1px #fff; }
.bod legend { padding: 3px 2px 0; margin-left: 3px; font-size: 11px; line-height: 12px; }
.sunk { height: 20px; margin: 1px 0 2px; border: 1px solid #808080; border-right-color: #fff; border-bottom-color: #fff; }
.whites { display: flex; gap: 3px; margin: 3px 1px 2px; }
.whites span { width: 55px; height: 17px; background: #fff; }
.xy { display: flex; align-items: center; height: 17px; margin-top: 2px; }
.xyl { width: 28px; padding-left: 2px; font-size: 12px; }
.val { width: 42px; height: 17px; background: #fff; text-align: center; line-height: 17px; font-size: 12px; }
.v1 { margin-right: 3px; }
.combo { width: 119px; height: 18px; margin: 5px 0 0 6px; display: flex; }
.cfield { width: 102px; height: 18px; background: #fff; border: 2px solid #000; border-top-color: #404040; }
.cbtn { width: 16px; height: 17px; display: flex; align-items: center; justify-content: center; box-shadow: inset -1px -1px #404040, inset 1px 1px #fff, inset -2px -2px #808080; }
.carr { width: 8px; height: 4px; }

/* status */
.status { height: 22px; flex: none; display: flex; gap: 3px; padding-top: 2px; font: 600 12px/15px "Noto Sans", sans-serif; }
.sp { height: 17px; border: 1px solid #808080; border-right-color: #fff; border-bottom-color: #fff; padding-left: 1px; white-space: nowrap; letter-spacing: .3px; }
.s1 { width: 149px; } .s2 { width: 137px; } .s3 { width: 137px; } .s4 { width: 107px; } .s5 { flex: 1; }

.strip { height: 5px; border-top: 1px solid #fff; position: relative; display: flex; justify-content: flex-end; }
.split { position: absolute; left: 199px; top: 0; width: 3px; height: 4px; border-left: 1px solid #808080; border-right: 1px solid #fff; }
.grip { width: 12px; height: 4px; }

/* taskbar */
.taskbar { height: 30px; border-top: 1px solid #fff; display: flex; align-items: flex-start; padding: 3px 3px 0 2px; }
.start, .task { height: 22px; display: flex; align-items: center; font-weight: 700; font-size: 12px; letter-spacing: .3px; }
.start { width: 52px; padding-left: 2px; gap: 2px; box-shadow: inset -1px -1px #404040, inset 1px 1px #fff, inset -2px -2px #808080; }
.flag { width: 16px; height: 16px; flex: none; }
.task {
  width: 159px; margin-left: 5px; padding-left: 7px; gap: 6px;
  background: repeating-conic-gradient(#fff 0 25%, #d4d0c8 0 50%) 0 0 / 2px 2px;
  box-shadow: inset 1px 1px #404040, inset -1px -1px #fff, inset 2px 2px #808080;
}
.spacer { flex: 1; }
.lang { width: 16px; height: 16px; margin-top: 4px; background: #0a246a; color: #fff; text-align: center; line-height: 16px; font-size: 11px; }
.tsep { width: 2px; height: 23px; margin: 0 5px; border-left: 1px solid #808080; border-right: 1px solid #fff; }
.tray { width: 130px; height: 23px; display: flex; align-items: center; padding-left: 5px; gap: 1px; border: 1px solid #808080; border-right-color: #fff; border-bottom-color: #fff; }
.chev { width: 12px; font-weight: 700; font-size: 12px; }
.ti { width: 16px; height: 16px; flex: none; }
.clock { margin-left: 8px; white-space: nowrap; }
```
